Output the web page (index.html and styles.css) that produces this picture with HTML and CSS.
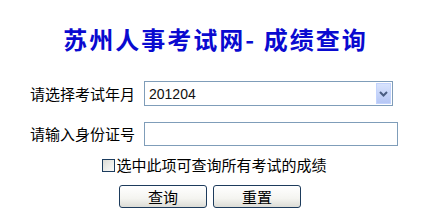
FILE: index.html
```html
<!DOCTYPE html>
<html lang="zh-CN">
<head>
<meta charset="utf-8">
<title>苏州人事考试网- 成绩查询</title>
<link rel="stylesheet" href="styles.css">
</head>
<body>
<div class="page">
  <h1 class="title">苏州人事考试网- 成绩查询</h1>
  <form class="form">
    <div class="row">
      <label class="label">请选择考试年月</label>
      <div class="select">
        <span class="select-value">201204</span>
        <span class="select-btn">
          <svg width="9" height="6" viewBox="0 0 9 6"><path d="M1 1 L4.5 4.5 L8 1" fill="none" stroke="#4a5d82" stroke-width="2"/></svg>
        </span>
      </div>
    </div>
    <div class="row row-2">
      <label class="label">请输入身份证号</label>
      <input class="text-input" type="text">
    </div>
  </form>
  <div class="check-row">
    <input class="check" type="checkbox" id="all">
    <label for="all" class="check-label">选中此项可查询所有考试的成绩</label>
  </div>
  <div class="buttons">
    <button class="btn" type="button">查询</button>
    <button class="btn" type="button">重置</button>
  </div>
</div>
</body>
</html>
```
FILE: styles.css
```css
body {
  margin: 0;
  background: #fff;
  font-family: "Noto Sans CJK SC", "DejaVu Sans", sans-serif;
  color: #000;
}
.page {
  width: 431px;
  padding-top: 27px;
}
.title {
  margin: 0;
  height: 24px;
  line-height: 24px;
  font-size: 24px;
  font-weight: bold;
  color: #0a0ad0;
  text-align: center;
  letter-spacing: 2px;
  padding-left: 0;
}
.form {
  margin: 30px 0 0 30px;
  display: flex;
  flex-direction: column;
}
.row {
  display: flex;
  align-items: center;
  height: 25px;
}
.row-2 {
  margin-top: 16px;
  height: 24px;
}
.label {
  width: 114px;
  font-size: 15px;
  line-height: 20px;
  color: #000;
}
.select {
  box-sizing: border-box;
  width: 249px;
  height: 25px;
  border: 1px solid #7f9db9;
  display: flex;
  align-items: center;
  justify-content: space-between;
  padding: 1px 1px 1px 4px;
}
.select-value {
  font-family: "Liberation Sans", Arial, sans-serif;
  font-size: 14px;
  color: #111;
}
.select-btn {
  box-sizing: border-box;
  width: 15px;
  height: 21px;
  border: 1px solid #c3d3fd;
  background: linear-gradient(#d8e3fd, #b6c7f5);
  display: flex;
  align-items: center;
  justify-content: center;
}
.text-input {
  box-sizing: border-box;
  width: 254px;
  height: 24px;
  border: 1px solid #7f9db9;
  margin: 0;
  padding: 0 3px;
  font-size: 14px;
}
.check-row {
  margin-top: 12px;
  display: flex;
  align-items: center;
  justify-content: center;
  height: 14px;
  padding-right: 2px;
}
.check {
  appearance: none;
  -webkit-appearance: none;
  box-sizing: border-box;
  width: 13px;
  height: 13px;
  margin: 0 1px 0 0;
  border: 1px solid #1c3c5e;
  background: linear-gradient(135deg, #dcdcd6, #fbfbfa);
}
.check-label {
  font-size: 15px;
  line-height: 20px;
}
.buttons {
  margin-top: 13px;
  display: flex;
  justify-content: center;
  gap: 6px;
  padding-right: 11px;
}
.btn {
  box-sizing: border-box;
  width: 88px;
  height: 23px;
  border: 1px solid #1d3b5c;
  border-radius: 3px;
  background: linear-gradient(#ffffff, #f4f4f0 60%, #dcdcd6);
  font-family: "Noto Sans CJK SC", sans-serif;
  font-size: 15px;
  line-height: 19px;
  padding: 0;
  color: #000;
}
```
